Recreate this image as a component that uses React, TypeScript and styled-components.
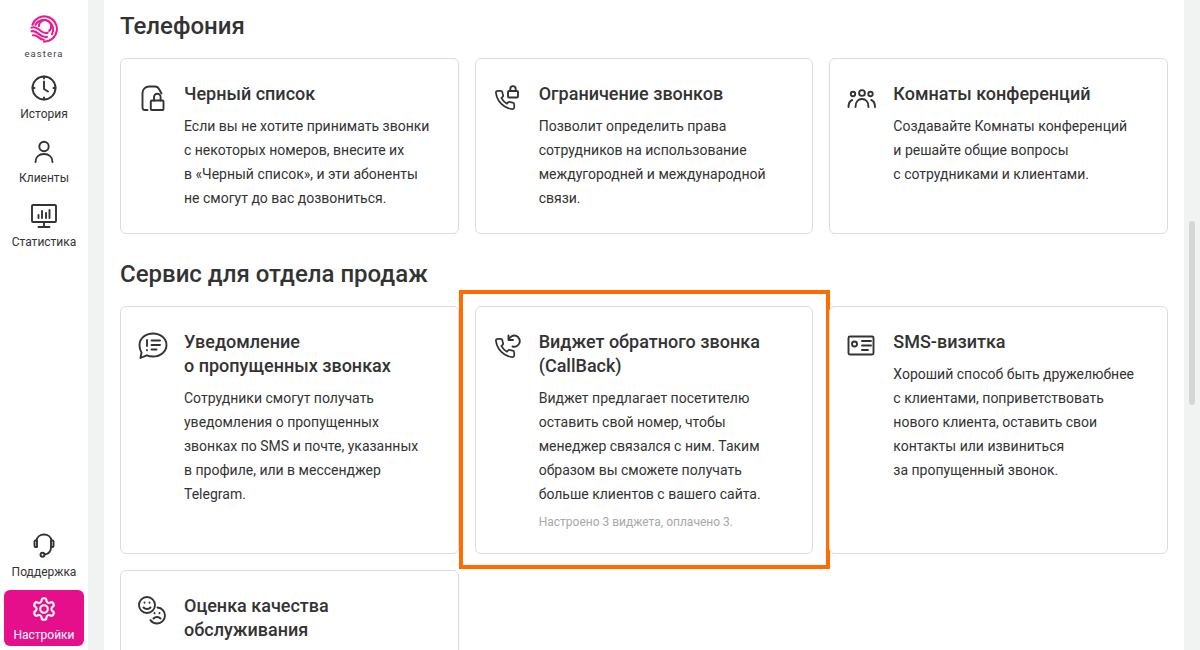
import React from "react";
import styled, { createGlobalStyle } from "styled-components";

const Global = createGlobalStyle`
  html, body { margin: 0; padding: 0; height: 100%; overflow: hidden; background: #fff; }
  body { font-family: Roboto, "Liberation Sans", sans-serif; color: #333; }
  * { box-sizing: border-box; }
`;

const Page = styled.div`
  display: flex;
  width: 1200px;
  height: 650px;
  overflow: hidden;
`;
const Sidebar = styled.nav`
  width: 88px;
  flex: none;
  height: 650px;
  display: flex;
  flex-direction: column;
  align-items: center;
  padding: 14px 4px 4px;
`;
const Logo = styled.div`
  display: flex;
  flex-direction: column;
  align-items: center;
  height: 58px;
  padding-top: 1px;
`;
const LogoText = styled.span`
  font-size: 9.5px;
  letter-spacing: 1.1px;
  line-height: 12px;
  margin-top: 5px;
  color: #444;
`;
const NavItem = styled.div<{ $active?: boolean; $height?: number; $top?: number }>`
  width: 80px;
  height: ${(p) => p.$height ?? 64}px;
  display: flex;
  flex-direction: column;
  align-items: center;
  padding-top: ${(p) => p.$top ?? 3}px;
  border-radius: 6px;
  color: ${(p) => (p.$active ? "#fff" : "#333")};
  background: ${(p) => (p.$active ? "#e50f8c" : "transparent")};
`;
const NavLabel = styled.span<{ $gap?: number }>`
  font-size: 12px;
  line-height: 16px;
  margin-top: ${(p) => p.$gap ?? 5}px;
`;
const Spacer = styled.div`
  flex: 1;
`;
const Gutter = styled.div`
  width: 16px;
  flex: none;
  background: #f1f2f2;
`;
const Main = styled.main`
  flex: 1;
  height: 650px;
  overflow: hidden;
  padding: 10px 16px 0;
`;
const Heading = styled.h2`
  margin: 0 0 16px;
  font-size: 24px;
  line-height: 32px;
  font-weight: 500;
  color: #333;
`;
const Grid = styled.section`
  display: grid;
  grid-template-columns: repeat(3, 1fr);
  gap: 16px;
  margin-bottom: 24px;
`;
const Card = styled.article`
  position: relative;
  display: flex;
  gap: 16px;
  border: 1px solid #dcdcdc;
  border-radius: 6px;
  padding: 23px 23px 23px 15px;
  background: #fff;
`;
const IconBox = styled.div`
  width: 32px;
  height: 32px;
  flex: none;
`;
const CardBody = styled.div`
  flex: 1;
  min-width: 0;
`;
const CardTitle = styled.h3`
  margin: 0 0 8px;
  font-size: 18px;
  line-height: 24px;
  font-weight: 500;
  color: #333;
`;
const Line = styled.span`
  display: block;
  white-space: nowrap;
`;
const CardText = styled.p`
  margin: 0;
  font-size: 14px;
  line-height: 24px;
  color: #333;
`;
const Note = styled.p`
  margin: 8px 0 0;
  font-size: 12px;
  line-height: 16px;
  color: #a8a8a8;
`;
const Highlight = styled.div`
  position: absolute;
  left: -17px;
  top: -17px;
  right: -18px;
  bottom: -16px;
  border: 4px solid #ff6d00;
  pointer-events: none;
`;
const ScrollTrack = styled.div`
  width: 16px;
  flex: none;
  background: #f1f2f2;
  padding: 221px 5px 0;
`;
const ScrollThumb = styled.div`
  height: 184px;
  border-radius: 3px;
  background: #d6d6d6;
`;
const Glyph = styled.svg`
  display: block;
  fill: none;
  stroke: currentColor;
  stroke-width: 1.9;
  stroke-linecap: round;
  stroke-linejoin: round;
`;
const CardGlyph = styled(Glyph)`
  color: #333;
`;

const PHONE =
  "M22 16.92v3a2 2 0 0 1-2.18 2 19.79 19.79 0 0 1-8.63-3.07 19.5 19.5 0 0 1-6-6 19.79 19.79 0 0 1-3.07-8.67A2 2 0 0 1 4.11 2h3a2 2 0 0 1 2 1.72 12.84 12.84 0 0 0 .7 2.81 2 2 0 0 1-.45 2.11L8.09 9.91a16 16 0 0 0 6 6l1.27-1.27a2 2 0 0 1 2.11-.45 12.84 12.84 0 0 0 2.81.7A2 2 0 0 1 22 16.92z";

const LogoMark = () => (
  <svg width="28" height="28" viewBox="0 0 30 30" fill="none" stroke="#eb1b90" strokeWidth="2.2" strokeLinecap="round">
    <path d="M2.6 10.5A13.500 13.500 0 1 1 15 28.500" />
    <path d="M5.800 10.500A10 10 0 1 1 23.500 20.500" />
    <path d="M9.500 12A6.600 6.600 0 1 1 20.500 17" />
    <path d="M1.500 13.500c4-1.600 6.800 .8 9.500 3.200 2.600 2.300 5.300 3.200 8 2.300" />
    <path d="M1.600 17.500c3.500-1 5.800 1 8 3 2.600 2.300 5.300 3.600 8.600 3" />
    <path d="M3.200 21.800c2.500-.6 4.200 .7 6 2.200 1.700 1.400 3.400 2.500 5.600 2.600" />
  </svg>
);

const ClockIcon = () => (
  <Glyph width="26" height="26" viewBox="0 0 26 26">
    <circle cx="13" cy="13" r="11.500" />
    <path d="M13 6.500V14l4 2.500M13 1.500v2M13 22.500v2M1.500 13h2M22.500 13h2" />
  </Glyph>
);
const PersonIcon = () => (
  <Glyph width="26" height="26" viewBox="0 0 26 26">
    <circle cx="13" cy="7.500" r="4.700" />
    <path d="M4.500 23c0-5 3.500-8 8.500-8s8.500 3 8.500 8" />
  </Glyph>
);
const MonitorIcon = () => (
  <Glyph width="26" height="26" viewBox="0 0 26 26">
    <rect x="1" y="2" width="24" height="17" rx="1" />
    <path d="M13 19v4M7.500 24h11M7.500 15v-3M11 15V8M15 15v-5M18.500 15V7" />
  </Glyph>
);
const HeadsetIcon = () => (
  <Glyph width="26" height="26" viewBox="0 0 26 26">
    <path d="M5.500 8.500C6 5 9 2.500 13 2.500s7 2.500 7.500 6" />
    <path d="M6 8.500H4.500a1 1 0 0 0-1 1v4.500a1 1 0 0 0 1 1H6zM20 8.500h1.500a1 1 0 0 1 1 1v4.500a1 1 0 0 1-1 1H20z" />
    <path d="M20 15c0 4.500-2.500 7-6.500 7.500" />
    <circle cx="11.500" cy="22.800" r="2" />
  </Glyph>
);
const GearIcon = () => (
  <Glyph width="26" height="26" viewBox="0 0 24 24">
    <path d="M12.220 2h-.440a2 2 0 0 0-2 2v.180a2 2 0 0 1-1 1.730l-.430.250a2 2 0 0 1-2 0l-.150-.080a2 2 0 0 0-2.730.730l-.220.380a2 2 0 0 0 .730 2.730l.150.100a2 2 0 0 1 1 1.720v.510a2 2 0 0 1-1 1.740l-.150.090a2 2 0 0 0-.730 2.730l.220.380a2 2 0 0 0 2.730.730l.150-.080a2 2 0 0 1 2 0l.430.250a2 2 0 0 1 1 1.730V20a2 2 0 0 0 2 2h.440a2 2 0 0 0 2-2v-.180a2 2 0 0 1 1-1.730l.430-.250a2 2 0 0 1 2 0l.150.080a2 2 0 0 0 2.730-.730l.220-.390a2 2 0 0 0-.730-2.730l-.150-.080a2 2 0 0 1-1-1.740v-.500a2 2 0 0 1 1-1.740l.150-.090a2 2 0 0 0 .730-2.730l-.220-.380a2 2 0 0 0-2.730-.730l-.150.080a2 2 0 0 1-2 0l-.430-.250a2 2 0 0 1-1-1.730V4a2 2 0 0 0-2-2z" />
    <circle cx="12" cy="12" r="3.500" />
  </Glyph>
);

const icons: Record<string, React.ReactNode> = {
  docLock: (
    <>
      <path d="M25.500 11.500 23 7a4.500 4.500 0 0 0-4-2.500h-6a6.500 6.500 0 0 0-6.500 6.500v14.500a2.500 2.500 0 0 0 2.500 2.500h2.500" />
      <rect x="14.800" y="18.500" width="12.700" height="9.500" rx="1" />
      <path d="M18 18.500v-3.500a3.300 3.300 0 0 1 6.600 0v3.500" />
    </>
  ),
  phoneLock: (
    <>
      <path d={PHONE} transform="translate(3 7) scale(.92)" />
      <rect x="17" y="9" width="10" height="6.500" rx="1" />
      <path d="M19.300 9V6.800a2.700 2.700 0 0 1 5.400 0V9" />
    </>
  ),
  group: (
    <>
      <circle cx="17" cy="11" r="2.900" />
      <circle cx="8" cy="12" r="2.200" />
      <circle cx="25.500" cy="12" r="2.200" />
      <path d="M10.500 25c0-5 2.700-8 6.500-8s6.500 3 6.500 8" />
      <path d="M3.500 25c0-3.500 1.300-6 3.700-7M30 25c0-3.500-1.300-6-3.700-7" />
    </>
  ),
  chat: (
    <>
      <path d="M17 3.500c7.500 0 13.500 5 13.500 11.500S24.500 26.500 17 26.500c-2.300 0-4.500-.4-6.300-1.200L4.500 28l1-5.500c-1.300-2-2-4.700-2-7.500C3.500 8.500 9.500 3.500 17 3.500z" />
      <path d="M11 10v6M11 20v.2M15.500 10.500h8.500M15.500 15h8.500M15.500 19.500h5" />
    </>
  ),
  callback: (
    <>
      <path d={PHONE} transform="translate(3 7) scale(.92)" />
      <path d="M18 9A5.600 5.600 0 1 1 21.500 16.500" />
      <path d="M17.500 5.500V10H22" />
    </>
  ),
  card: (
    <>
      <rect x="3.500" y="6.500" width="25" height="18" rx="1.500" />
      <circle cx="9.500" cy="14" r="2.500" />
      <path d="M17 11h9M17 15.500h9M17 20h6" />
    </>
  ),
  faces: (
    <>
      <circle cx="11" cy="11" r="8" />
      <path d="M7.500 13.500c1.800 2 5.200 2 7 0M8.500 8.500v.2M13.500 8.500v.2" />
      <path d="M21.500 13.500a8 8 0 1 1-8.500 8.500" strokeDasharray="32 100" />
      <path d="M17.500 24.500c1.800-2 5.200-2 7 0M18.500 19v.2M23.500 19v.2" />
    </>
  ),
};

const CardIcon = ({ name }: { name: string }) => (
  <IconBox>
    <CardGlyph width="32" height="32" viewBox="0 0 32 32">
      {icons[name]}
    </CardGlyph>
  </IconBox>
);

type CardData = { icon: string; title: string[]; text?: string[]; note?: string; marked?: boolean };

const phoneCards: CardData[] = [
  {
    icon: "docLock",
    title: ["Черный список"],
    text: [
      "Если вы не хотите принимать звонки",
      "с некоторых номеров, внесите их",
      "в «Черный список», и эти абоненты",
      "не смогут до вас дозвониться.",
    ],
  },
  {
    icon: "phoneLock",
    title: ["Ограничение звонков"],
    text: [
      "Позволит определить права",
      "сотрудников на использование",
      "междугородней и международной",
      "связи.",
    ],
  },
  {
    icon: "group",
    title: ["Комнаты конференций"],
    text: [
      "Создавайте Комнаты конференций",
      "и решайте общие вопросы",
      "с сотрудниками и клиентами.",
    ],
  },
];

const salesCards: CardData[] = [
  {
    icon: "chat",
    title: ["Уведомление", "о пропущенных звонках"],
    text: [
      "Сотрудники смогут получать",
      "уведомления о пропущенных",
      "звонках по SMS и почте, указанных",
      "в профиле, или в мессенджер",
      "Telegram.",
    ],
  },
  {
    icon: "callback",
    title: ["Виджет обратного звонка", "(CallBack)"],
    text: [
      "Виджет предлагает посетителю",
      "оставить свой номер, чтобы",
      "менеджер связался с ним. Таким",
      "образом вы сможете получать",
      "больше клиентов с вашего сайта.",
    ],
    note: "Настроено 3 виджета, оплачено 3.",
    marked: true,
  },
  {
    icon: "card",
    title: ["SMS-визитка"],
    text: [
      "Хороший способ быть дружелюбнее",
      "с клиентами, поприветствовать",
      "нового клиента, оставить свои",
      "контакты или извиниться",
      "за пропущенный звонок.",
    ],
  },
  {
    icon: "faces",
    title: ["Оценка качества", "обслуживания"],
  },
];

const InfoCard = ({ data }: { data: CardData }) => (
  <Card>
    <CardIcon name={data.icon} />
    <CardBody>
      <CardTitle>
        {data.title.map((t) => (
          <Line key={t}>{t}</Line>
        ))}
      </CardTitle>
      {data.text && (
        <CardText>
          {data.text.map((t) => (
            <Line key={t}>{t}</Line>
          ))}
        </CardText>
      )}
      {data.note && <Note>{data.note}</Note>}
    </CardBody>
    {data.marked && <Highlight />}
  </Card>
);

export default function App() {
  return (
    <Page>
      <Global />
      <Sidebar>
        <Logo>
          <LogoMark />
          <LogoText>eastera</LogoText>
        </Logo>
        <NavItem>
          <ClockIcon />
          <NavLabel>История</NavLabel>
        </NavItem>
        <NavItem>
          <PersonIcon />
          <NavLabel>Клиенты</NavLabel>
        </NavItem>
        <NavItem>
          <MonitorIcon />
          <NavLabel>Статистика</NavLabel>
        </NavItem>
        <Spacer />
        <NavItem $height={61}>
          <HeadsetIcon />
          <NavLabel $gap={6}>Поддержка</NavLabel>
        </NavItem>
        <NavItem $active $height={56} $top={6}>
          <GearIcon />
          <NavLabel>Настройки</NavLabel>
        </NavItem>
      </Sidebar>
      <Gutter />
      <Main>
        <Heading>Телефония</Heading>
        <Grid>
          {phoneCards.map((c) => (
            <InfoCard key={c.icon} data={c} />
          ))}
        </Grid>
        <Heading>Сервис для отдела продаж</Heading>
        <Grid>
          {salesCards.map((c) => (
            <InfoCard key={c.icon} data={c} />
          ))}
        </Grid>
      </Main>
      <ScrollTrack>
        <ScrollThumb />
      </ScrollTrack>
    </Page>
  );
}
